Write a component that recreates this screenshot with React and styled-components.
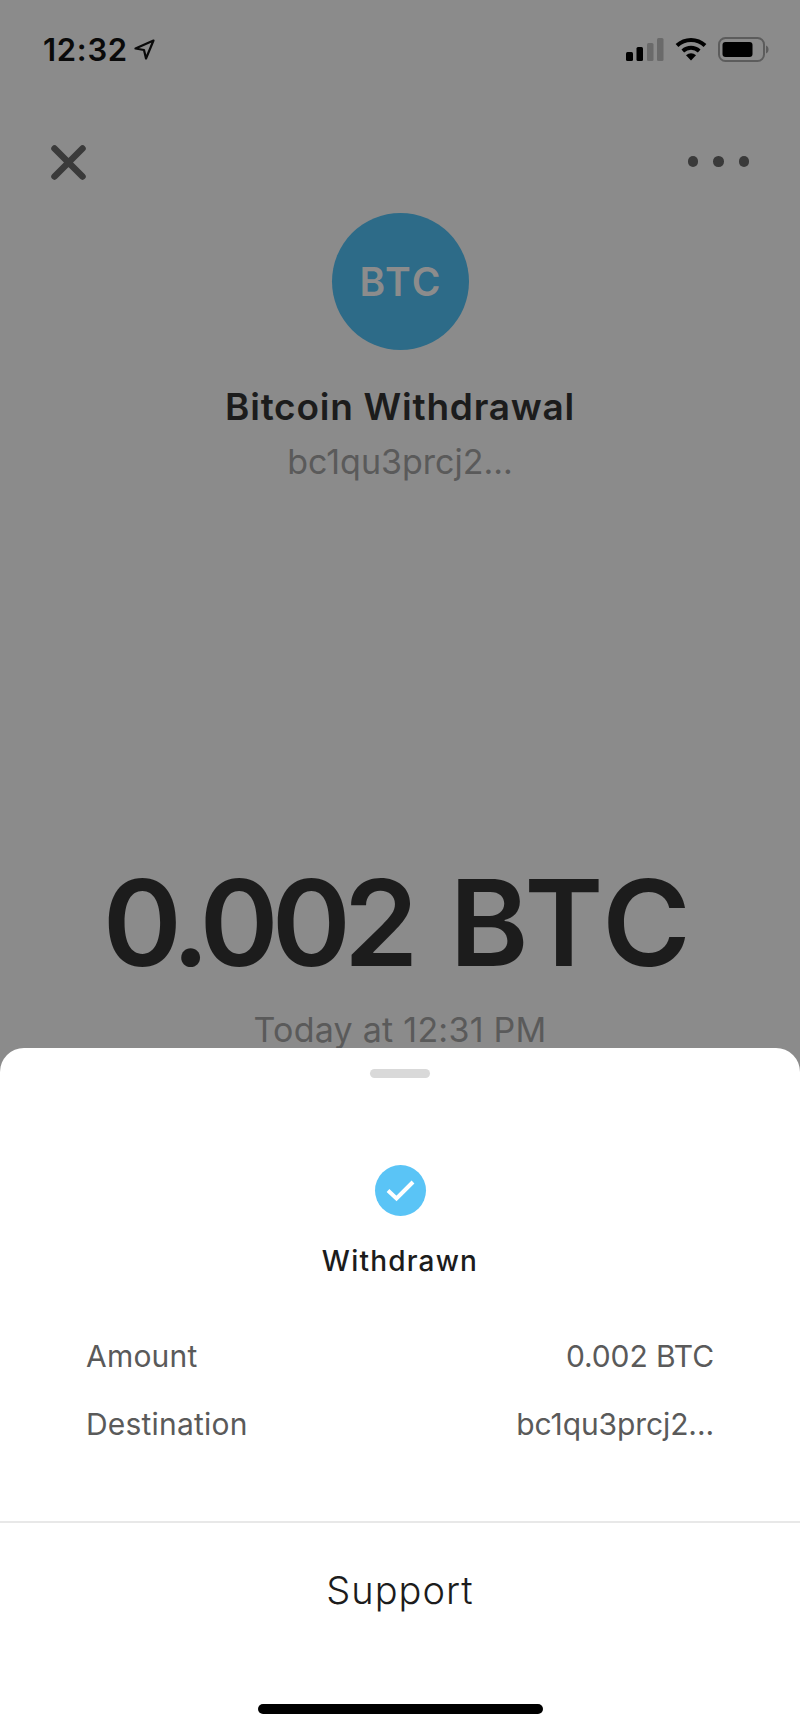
import React from "react";
import styled, { createGlobalStyle } from "styled-components";

const Global = createGlobalStyle`
  html, body { margin: 0; padding: 0; background: #8b8b8b; }
  body { font-family: "Inter", "Liberation Sans", sans-serif; }
`;

const Page = styled.div`
  width: 800px;
  height: 1732px;
  display: flex;
  flex-direction: column;
  overflow: hidden;
  background: #8b8b8b;
`;

const Backdrop = styled.section`
  height: 1048px;
  flex: none;
  display: flex;
  flex-direction: column;
  align-items: center;
`;

const StatusBar = styled.div`
  align-self: stretch;
  height: 98px;
  flex: none;
  box-sizing: border-box;
  padding: 0 31px 0 43px;
  display: flex;
  align-items: center;
  justify-content: space-between;
`;

const Clock = styled.div`
  display: flex;
  align-items: center;
  gap: 6px;
  font-size: 31px;
  font-weight: 600;
  letter-spacing: 0.7px;
  color: #0a0a0a;
`;

const StatusIcons = styled.div`
  display: flex;
  align-items: center;
  gap: 11px;
`;

const NavBar = styled.div`
  align-self: stretch;
  height: 115px;
  flex: none;
  box-sizing: border-box;
  padding: 47px 51px 0 51px;
  display: flex;
  align-items: flex-start;
  justify-content: space-between;
`;

const Dots = styled.div`
  height: 33px;
  display: flex;
  align-items: center;
  gap: 15px;
`;

const Dot = styled.span`
  width: 10.5px;
  height: 10.5px;
  border-radius: 50%;
  background: #3a3a3a;
`;

const Avatar = styled.div`
  width: 137px;
  height: 137px;
  flex: none;
  border-radius: 50%;
  background: #2d6b88;
  color: #8c8c8c;
  display: flex;
  align-items: center;
  justify-content: center;
  font-size: 39px;
  font-weight: 600;
  letter-spacing: 2px;
  padding-left: 2px;
  box-sizing: border-box;
`;

const Title = styled.h1`
  margin: 35px 0 0;
  font-size: 37px;
  line-height: 44px;
  font-weight: 600;
  letter-spacing: 0.75px;
  color: #1c1c1c;
`;

const Subtitle = styled.div`
  margin-top: 11px;
  font-size: 34px;
  line-height: 44px;
  font-weight: 400;
  color: #5a5a5a;
`;

const BigAmount = styled.div`
  margin-top: 369px;
  padding-right: 4px;
  display: flex;
  align-items: baseline;
  gap: 38px;
  font-size: 120px;
  line-height: 140px;
  font-weight: 600;
  color: #1c1c1c;
  white-space: nowrap;
`;

const AmountFigure = styled.span`
  letter-spacing: -7px;
`;

const AmountUnit = styled.span`
  letter-spacing: 2.5px;
`;

const Timestamp = styled.div`
  margin-top: 19px;
  font-size: 34px;
  line-height: 36px;
  font-weight: 400;
  letter-spacing: 0.25px;
  color: #5a5a5a;
  white-space: nowrap;
`;

const Sheet = styled.section`
  position: relative;
  flex: 1;
  display: flex;
  flex-direction: column;
  align-items: center;
  background: #fff;
  border-radius: 24px 24px 0 0;
`;

const Handle = styled.div`
  width: 60px;
  height: 9px;
  margin-top: 21px;
  border-radius: 5px;
  background: #d9d9d9;
`;

const CheckBadge = styled.div`
  width: 51px;
  height: 51px;
  margin-top: 87px;
  border-radius: 50%;
  background: #5ac4f6;
  display: flex;
  align-items: center;
  justify-content: center;
`;

const Status = styled.div`
  margin-top: 27px;
  font-size: 28px;
  line-height: 36px;
  font-weight: 500;
  letter-spacing: 1.2px;
  color: #1c1c1c;
`;

const Details = styled.dl`
  align-self: stretch;
  margin: 57px 0 0;
  padding: 0 86px;
  display: flex;
  flex-direction: column;
  gap: 28px;
`;

const Row = styled.div`
  height: 40px;
  display: flex;
  align-items: center;
  justify-content: space-between;
  font-size: 30px;
  letter-spacing: 0.2px;
  color: #5a5a5a;
`;

const Term = styled.dt``;
const Value = styled.dd`
  margin: 0;
  letter-spacing: -0.1px;
`;

const SupportRow = styled.div`
  align-self: stretch;
  height: 134px;
  flex: none;
  margin-top: 77px;
  border-top: 2px solid #e8e8e8;
  display: flex;
  align-items: center;
  justify-content: center;
  font-size: 38px;
  font-weight: 300;
  letter-spacing: 1px;
  color: #1c1c1c;
`;

const HomeIndicator = styled.div`
  width: 285px;
  height: 10px;
  margin-top: 47px;
  border-radius: 5px;
  background: #000;
`;

const LocationArrow = () => (
  <svg width="21" height="21" viewBox="0 0 21 21" fill="none">
    <path d="M19.5 1.5 L1.5 9.5 L10 11 L12 19.5 Z" stroke="#0a0a0a" strokeWidth="2.2" strokeLinejoin="round" />
  </svg>
);

const Signal = () => (
  <svg width="38" height="23" viewBox="0 0 38 23">
    <rect x="0" y="14" width="7" height="9" rx="1.5" fill="#000" />
    <rect x="10.5" y="9" width="6.5" height="14" rx="1.5" fill="#000" />
    <rect x="21" y="5" width="6.5" height="18" rx="1.5" fill="#6a6a6a" />
    <rect x="31" y="0" width="6.5" height="23" rx="1.5" fill="#6a6a6a" />
  </svg>
);

const Wifi = () => (
  <svg width="32" height="24" viewBox="0 0 32 24" fill="none">
    <path d="M2 8.5 C10 1 22 1 30 8.5" stroke="#000" strokeWidth="4" strokeLinecap="butt" />
    <path d="M7.8 14 C12.5 9.8 19.5 9.8 24.2 14" stroke="#000" strokeWidth="4" />
    <path d="M11 18.2 C14 15.5 18 15.5 21 18.2 L16 23.5 Z" fill="#000" />
  </svg>
);

const Battery = () => (
  <svg width="51" height="25" viewBox="0 0 51 25" fill="none">
    <rect x="1" y="1" width="45" height="23" rx="6.5" stroke="#5c5c5c" strokeWidth="2" />
    <rect x="4.5" y="5" width="30" height="15" rx="3" fill="#000" />
    <path d="M48 8.5 C50 9.2 50.5 11 50.5 12.5 C50.5 14 50 15.8 48 16.5 Z" fill="#5c5c5c" />
  </svg>
);

const CloseIcon = () => (
  <svg width="35" height="35" viewBox="0 0 35 35" fill="none">
    <path d="M3.5 3.5 L31.5 31.5 M31.5 3.5 L3.5 31.5" stroke="#3a3a3a" strokeWidth="6.5" strokeLinecap="round" />
  </svg>
);

const CheckIcon = () => (
  <svg width="29" height="23" viewBox="0 0 29 23" fill="none">
    <path d="M2 11.5 L10.5 19.5 L27 3" stroke="#fff" strokeWidth="4" />
  </svg>
);

export default function App() {
  return (
    <Page>
      <Global />
      <Backdrop>
        <StatusBar>
          <Clock>
            12:32
            <LocationArrow />
          </Clock>
          <StatusIcons>
            <Signal />
            <Wifi />
            <Battery />
          </StatusIcons>
        </StatusBar>
        <NavBar>
          <CloseIcon />
          <Dots>
            <Dot />
            <Dot />
            <Dot />
          </Dots>
        </NavBar>
        <Avatar>BTC</Avatar>
        <Title>Bitcoin Withdrawal</Title>
        <Subtitle>bc1qu3prcj2...</Subtitle>
        <BigAmount>
          <AmountFigure>0.002</AmountFigure>
          <AmountUnit>BTC</AmountUnit>
        </BigAmount>
        <Timestamp>Today at 12:31 PM</Timestamp>
      </Backdrop>
      <Sheet>
        <Handle />
        <CheckBadge>
          <CheckIcon />
        </CheckBadge>
        <Status>Withdrawn</Status>
        <Details>
          <Row>
            <Term>Amount</Term>
            <Value>0.002 BTC</Value>
          </Row>
          <Row>
            <Term>Destination</Term>
            <Value>bc1qu3prcj2...</Value>
          </Row>
        </Details>
        <SupportRow>Support</SupportRow>
        <HomeIndicator />
      </Sheet>
    </Page>
  );
}
